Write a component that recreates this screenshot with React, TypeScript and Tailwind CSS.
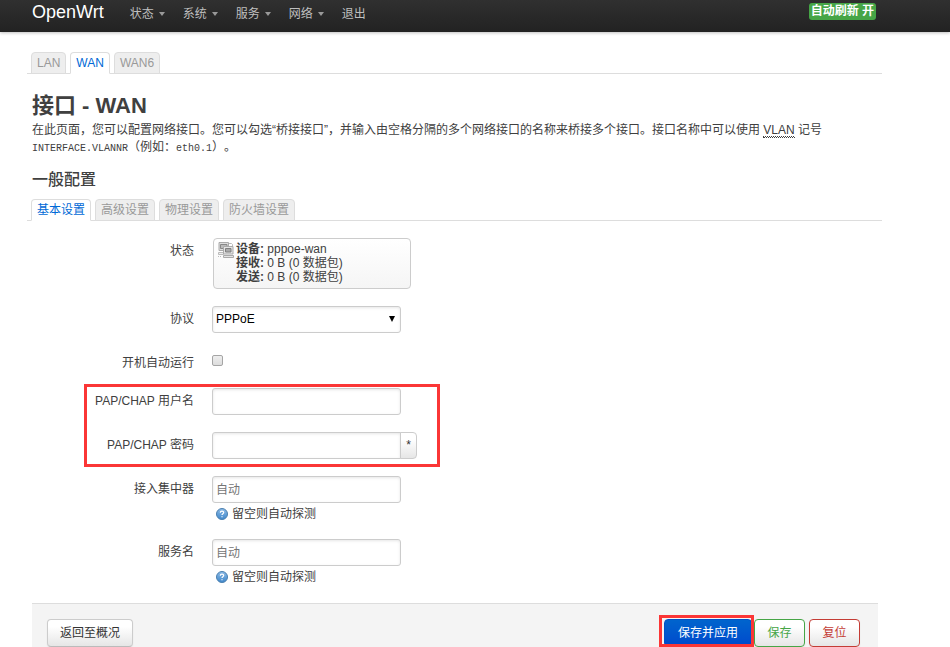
import type { ReactNode } from "react";

const menus = ["状态", "系统", "服务", "网络"];

function Tabs({ items, active, label }: { items: string[]; active: string; label: string }) {
  return (
    <nav aria-label={label} className="border-b border-[#ddd] pl-1">
      <ul className="-mb-px flex gap-1">
        {items.map((t) => (
          <li key={t}>
            <a
              href="#"
              aria-current={t === active ? "page" : undefined}
              className={
                t === active
                  ? "block h-[22px] rounded-t border border-[#ddd] border-b-white bg-white px-[5px] leading-5 text-[#0069d6]"
                  : "block h-[22px] rounded-t border border-[#ddd] bg-[#eee] px-[5px] leading-5 text-[#999]"
              }
            >
              {t}
            </a>
          </li>
        ))}
      </ul>
    </nav>
  );
}

function Row({ label, id, children }: { label: string; id?: string; children: ReactNode }) {
  return (
    <div className="flex items-start gap-[18px]">
      <label htmlFor={id} className="w-[162px] shrink-0 pt-1 text-right leading-[18px]">
        {label}
      </label>
      <div>{children}</div>
    </div>
  );
}

const field =
  "block h-[27px] w-[189px] rounded-[3px] border border-[#ccc] bg-white px-[3px] text-black shadow-[inset_0_1px_3px_rgba(0,0,0,0.1)] placeholder:text-[#757575] outline-none";

function Help() {
  return (
    <p className="flex h-[19px] items-end gap-1 pl-1 leading-4">
      <svg width="12" height="14" viewBox="0 0 12 14" aria-hidden="true">
        <defs>
          <linearGradient id="ball" x1="0" y1="0" x2="0" y2="1">
            <stop offset="0" stopColor="#8dbbe6" />
            <stop offset="1" stopColor="#3f87cb" />
          </linearGradient>
        </defs>
        <circle cx="6" cy="6" r="5.5" fill="url(#ball)" stroke="#4a7faf" />
        <path d="M4.3 4.8c0-2.3 3.4-2.2 3.4-.2 0 1.200-1.700 1.200-1.700 2.500M6 8.200v1.100" fill="none" stroke="#fff" strokeWidth="1.200" />
      </svg>
      <span>留空则自动探测</span>
    </p>
  );
}

function DeviceIcon() {
  return (
    <svg width="16" height="16" viewBox="0 0 16 16" className="shrink-0" aria-hidden="true">
      <path d="M1 .5h9.500v8h-9.500z" fill="#ddd" stroke="#aaa" />
      <path d="M2.500 2.500h6.500v4h-6.500z" fill="#bbb" stroke="#888" />
      <path d="M.5 10.500h5v2h-5z" fill="#eee" stroke="#bbb" />
      <path d="M11 1.500h2.500l1 1v2" fill="none" stroke="#bbb" />
      <path d="M5.500 4.500h9.500v7.500h-9.500z" fill="#e4e4e4" stroke="#aaa" />
      <path d="M7.500 6.500h5.500v3.500h-5.500z" fill="#aaa" stroke="#808080" />
      <path d="M5.500 13.500h10v2h-10z" fill="#e4e4e4" stroke="#aaa" />
      <path d="M0 14.500h4" stroke="#bbb" strokeDasharray="1 1" />
    </svg>
  );
}

const button =
  "h-7 min-w-[51px] rounded border bg-linear-to-b from-white via-white via-25% to-[#e6e6e6] px-3 leading-[18px] shadow-[0_1px_2px_rgba(0,0,0,0.05)]";

export default function App() {
  return (
    <div
      lang="zh-CN"
      className="min-h-screen bg-white font-['Liberation_Sans','Noto_Sans_CJK_SC',sans-serif] text-[12px] leading-[17px] text-[#404040] [text-spacing-trim:space-all]"
    >
      <header className="h-8 bg-linear-to-b from-[#303030] to-[#222] shadow-[0_1px_3px_rgba(0,0,0,0.25)]">
        <div className="flex max-w-[876px] items-start pl-8">
          <a href="#" className="text-[18px] leading-6 text-white">
            OpenWrt
          </a>
          <nav aria-label="主菜单" className="ml-[26px] flex gap-[18px] leading-7 text-[#bfbfbf]">
            {menus.map((m) => (
              <a key={m} href="#" className="flex items-center gap-[5px]">
                {m}
                <span className="border-x-3 border-t-4 border-x-transparent border-t-[#999]" />
              </a>
            ))}
            <a href="#">退出</a>
          </nav>
          <button type="button" className="mt-[3px] ml-auto h-[17px] rounded-[3px] bg-[#46a546] px-[2px] leading-[17px] font-bold text-white">
            自动刷新 开
          </button>
        </div>
      </header>

      <main className="max-w-[882px] pl-[27px]">
        <div className="pt-5">
          <Tabs items={["LAN", "WAN", "WAN6"]} active="WAN" label="接口" />
        </div>

        <div className="pl-[5px]">
          <h1 className="pt-4 text-[22px] leading-8 font-bold">接口 - WAN</h1>
          <p>
            在此页面，您可以配置网络接口。您可以勾选“桥接接口”，并输入由空格分隔的多个网络接口的名称来桥接多个接口。接口名称中可以使用{" "}
            <abbr title="Virtual Local Area Network" className="border-b border-dotted border-[#404040] underline decoration-dotted decoration-1 underline-offset-2">
              VLAN
            </abbr>{" "}
            记号{" "}
            <code className="font-['Liberation_Mono',monospace] text-[10px]">INTERFACE.VLANNR</code>（例如：
            <code className="font-['Liberation_Mono',monospace] text-[10px]">eth0.1</code>）。
          </p>
          <h2 className="pt-[11px] text-[16px] leading-6 font-medium">一般配置</h2>
        </div>

        <div className="pt-[7px]">
          <Tabs items={["基本设置", "高级设置", "物理设置", "防火墙设置"]} active="基本设置" label="一般配置" />
        </div>

        <form className="pr-1 pl-[5px]">
          <div className="flex flex-col gap-[17px] pt-[17px] pb-[18px]">
            <Row label="状态">
              <div className="ml-px flex w-[198px] items-start gap-[2px] rounded border border-[#ccc] bg-linear-to-b from-white to-[#f5f5f5] px-1 pt-[3px] pb-1 leading-[14px]">
                <DeviceIcon />
                <p>
                  <strong>设备:</strong> pppoe-wan
                  <br />
                  <strong>接收:</strong> 0 B (0 数据包)
                  <br />
                  <strong>发送:</strong> 0 B (0 数据包)
                </p>
              </div>
            </Row>

            <Row label="协议" id="proto">
              <div className="relative">
                <select id="proto" defaultValue="PPPoE" className={`${field} appearance-none`}>
                  <option>PPPoE</option>
                </select>
                <span className="pointer-events-none absolute top-[10px] right-[6px] border-x-3 border-t-6 border-x-transparent border-t-black" />
              </div>
            </Row>

            <Row label="开机自动运行" id="auto">
              <div className="flex h-5 items-center">
                <input
                  id="auto"
                  type="checkbox"
                  className="size-[11px] appearance-none rounded-[2px] border border-[#a5a5a5] bg-linear-to-b from-[#eee] to-[#ddd]"
                />
              </div>
            </Row>

            <div className="relative -mt-px flex flex-col gap-[17px]">
              <Row label="PAP/CHAP 用户名" id="user">
                <input id="user" type="text" className={field} />
              </Row>
              <Row label="PAP/CHAP 密码" id="pass">
                <div className="flex">
                  <input id="pass" type="password" className={`${field} rounded-r-none`} />
                  <button
                    type="button"
                    aria-label="显示密码"
                    className="-ml-px h-[27px] w-[17px] rounded-r border border-[#ccc] bg-linear-to-b from-white via-white via-25% to-[#e6e6e6] text-[#333]"
                  >
                    *
                  </button>
                </div>
              </Row>
              <div className="pointer-events-none absolute -top-1 left-[52px] h-[83px] w-[356px] border-3 border-[#fb3636]" />
            </div>

            <Row label="接入集中器" id="ac">
              <input id="ac" type="text" placeholder="自动" className={field} />
              <Help />
            </Row>
            <Row label="服务名" id="service">
              <input id="service" type="text" placeholder="自动" className={field} />
              <Help />
            </Row>
          </div>

          <div className="flex items-start border-t border-[#ddd] bg-[#f4f4f4] pt-[15px] pr-[18px] pl-[15px]">
            <button type="button" className={`${button} border-[#ccc] border-b-[#bbb] text-[#333]`}>
              返回至概况
            </button>
            <div className="relative mr-[2px] ml-auto">
              <button
                type="submit"
                className="block h-7 rounded border border-[#0050c8] bg-linear-to-b from-[#0064cd] to-[#0049cd] px-[13px] leading-[18px] text-white"
              >
                保存并应用
              </button>
              <div className="pointer-events-none absolute -top-1 -left-[5px] h-8 w-[95px] border-3 border-[#fb3636]" />
            </div>
            <button type="submit" className={`${button} mr-1 border-[#46a546] text-[#46a546]`}>
              保存
            </button>
            <button type="reset" className={`${button} border-[#c43c35] text-[#c43c35]`}>
              复位
            </button>
          </div>
        </form>
      </main>
    </div>
  );
}
